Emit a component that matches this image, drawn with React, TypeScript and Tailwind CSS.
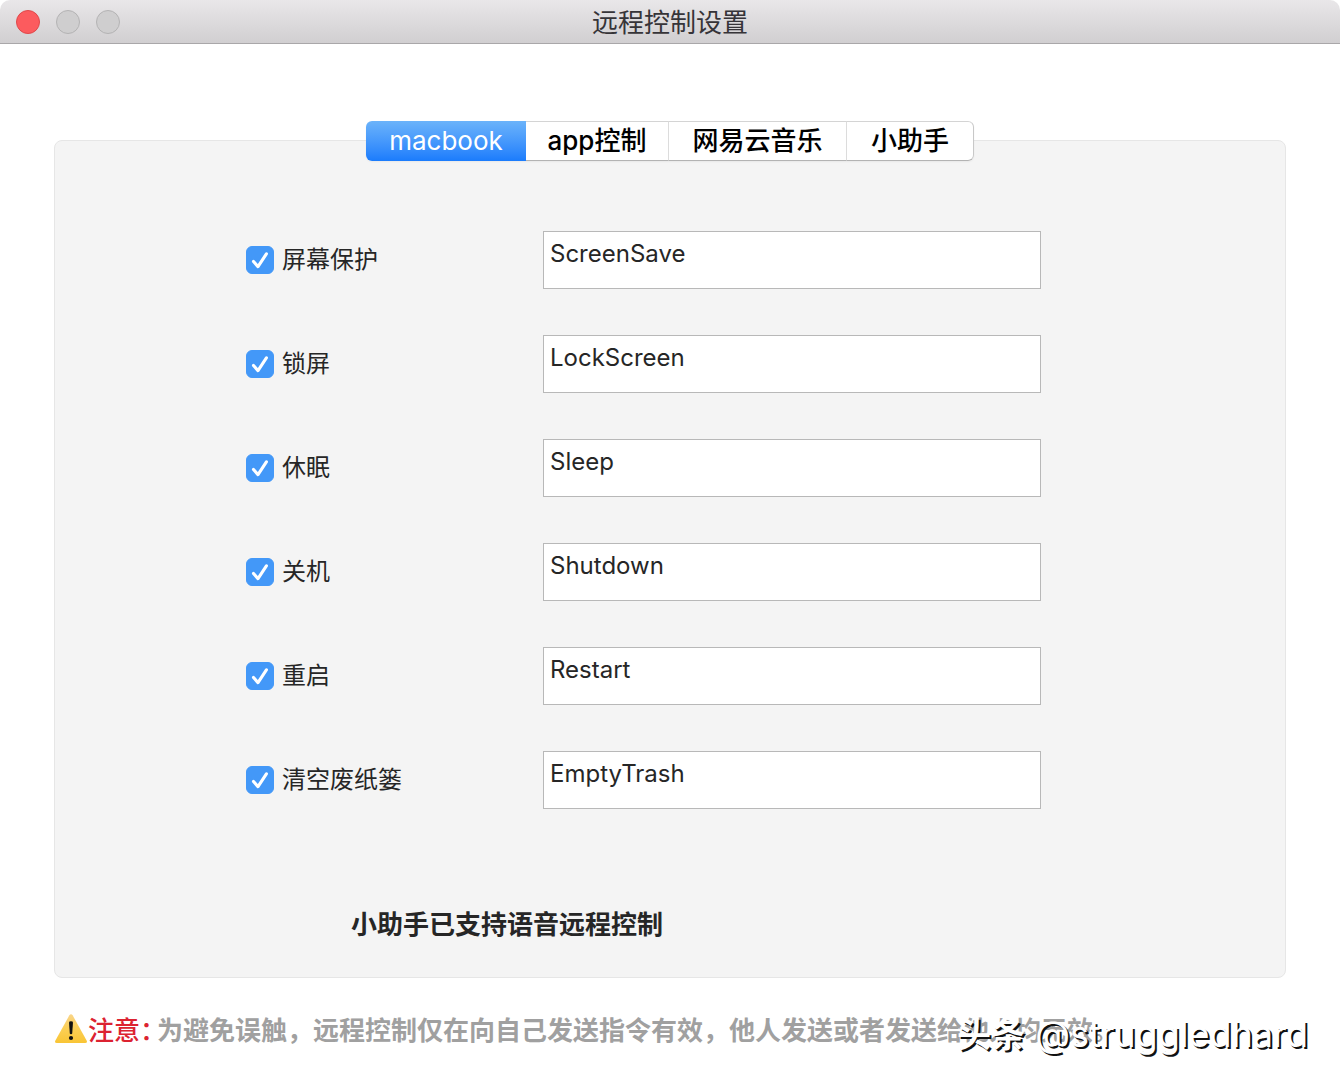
import { useState } from "react";
import clsx from "clsx";

const tabs = [
  { id: "macbook", label: "macbook", width: "w-[160px]" },
  { id: "app", label: "app控制", width: "w-[143px]" },
  { id: "music", label: "网易云音乐", width: "w-[178px]" },
  { id: "assistant", label: "小助手", width: "w-[127px]" }
];

const commands = [
  { id: "screen-save", label: "屏幕保护", value: "ScreenSave" },
  { id: "lock-screen", label: "锁屏", value: "LockScreen" },
  { id: "sleep", label: "休眠", value: "Sleep" },
  { id: "shutdown", label: "关机", value: "Shutdown" },
  { id: "restart", label: "重启", value: "Restart" },
  { id: "empty-trash", label: "清空废纸篓", value: "EmptyTrash" }
];

function TitleBar() {
  return (
    <header className="relative flex h-11 items-center justify-center rounded-t-[10px] border-b border-[#a9a7a9] bg-linear-to-b from-[#e9e7e9] to-[#d1cfd1]">
      <div className="absolute left-4 flex gap-4">
        <button type="button" aria-label="关闭" className="size-6 rounded-full border border-[#e0484a] bg-[#fc5b5e]" />
        <button type="button" aria-label="最小化" className="size-6 rounded-full border border-[#b4b3b4] bg-[#cfcecf]" />
        <button type="button" aria-label="缩放" className="size-6 rounded-full border border-[#b4b3b4] bg-[#cfcecf]" />
      </div>
      <h1 className="pt-0.5 text-[26px] leading-8 text-[#363438]">远程控制设置</h1>
    </header>
  );
}

function CommandRow({ id, label, value }: { id: string; label: string; value: string }) {
  return (
    <div className="flex items-center">
      <label htmlFor={id} className="flex w-[297px] shrink-0 items-center gap-2 text-2xl text-[#262626]">
        <span className="relative size-7">
          <input
            id={id}
            type="checkbox"
            defaultChecked
            className="peer block size-7 appearance-none rounded-md border border-[#b9b9b9] bg-white checked:border-[#4398f8] checked:bg-[#4398f8]"
          />
          <svg viewBox="0 0 28 28" className="pointer-events-none absolute inset-0 hidden size-7 peer-checked:block" fill="none">
            <path d="M7.5 15.5 12 20.6 20.4 7.8" stroke="#fff" strokeWidth="3.1" strokeLinecap="round" strokeLinejoin="round" />
          </svg>
        </span>
        {label}
      </label>
      <input
        type="text"
        aria-label={`${label}指令`}
        defaultValue={value}
        className="h-[58px] min-w-0 flex-1 border border-[#b8b8b8] bg-white px-1.5 pb-3.5 text-2xl text-[#262626] outline-none"
      />
    </div>
  );
}

function WarningIcon() {
  return (
    <svg viewBox="0 0 34 30" className="mb-1 h-[30px] w-[34px] shrink-0">
      <defs>
        <linearGradient id="warning-fill" x1="0" y1="0" x2="0" y2="1">
          <stop offset="0" stopColor="#f9d488" />
          <stop offset="0.5" stopColor="#fbcf55" />
          <stop offset="1" stopColor="#f9c535" />
        </linearGradient>
      </defs>
      <path d="M15.2 1.6Q17 -1 18.8 1.6L32.6 26.4Q33.8 29 31.2 29H2.8Q.2 29 1.4 26.4Z" fill="url(#warning-fill)" />
      <path d="M15 8.5Q15 7.3 17 7.3T19 8.5L18.2 19.6Q18 20.3 17 20.3T15.8 19.6Z" fill="#111" />
      <circle cx="17" cy="24" r="2.1" fill="#111" />
    </svg>
  );
}

export default function App() {
  const [active, setActive] = useState("macbook");

  return (
    <div className="relative min-h-screen bg-white font-['Inter','Noto_Sans_CJK_SC',sans-serif]">
      <TitleBar />
      <main className="px-[54px] pt-[77px]">
        <div role="tablist" className="relative z-10 -mb-[21px] flex justify-center">
          <div className="flex h-10 rounded-md bg-white shadow-xs">
            {tabs.map((tab) => (
              <button
                key={tab.id}
                type="button"
                role="tab"
                aria-selected={active === tab.id}
                onClick={() => setActive(tab.id)}
                className={clsx(
                  "h-10 text-[26px] leading-8 first:rounded-l-md last:rounded-r-md",
                  tab.width,
                  active === tab.id
                    ? "bg-linear-to-b from-[#6bb3fa] to-[#1a7cfc] text-white"
                    : "border-y border-r border-t-[#d4d4d4] border-r-[#dcdcdc] border-b-[#b3b3b3] bg-white font-medium text-black last:border-r-[#c8c8c8]"
                )}
              >
                {tab.label}
              </button>
            ))}
          </div>
        </div>
        <section className="rounded-lg border border-[#e6e6e6] bg-[#f4f4f4] pt-[90px] pr-[244px] pb-[33px] pl-[191px]">
          <div className="flex flex-col gap-[46px]">
            {commands.map((command) => (
              <CommandRow key={command.id} {...command} />
            ))}
          </div>
          <p className="mt-[97px] ml-[105px] text-[26px] leading-[38px] font-bold text-[#262626]">小助手已支持语音远程控制</p>
        </section>
        <p className="mt-8 flex items-center text-[26px] leading-[42px] font-bold whitespace-nowrap text-[#a0a0a0]">
          <WarningIcon />
          <span className="mr-1 shrink-0 font-medium text-[#dc2331] [font-feature-settings:'halt']">注意：</span>
          为避免误触，远程控制仅在向自己发送指令有效，他人发送或者发送给他人均无效。
        </p>
      </main>
      <div className="pointer-events-none absolute right-8 bottom-6 text-[36px] leading-[50px] whitespace-nowrap text-white [text-shadow:2px_2px_0_#111]">
        <span className="text-[34px] font-bold">头条</span> @struggledhard
      </div>
    </div>
  );
}
